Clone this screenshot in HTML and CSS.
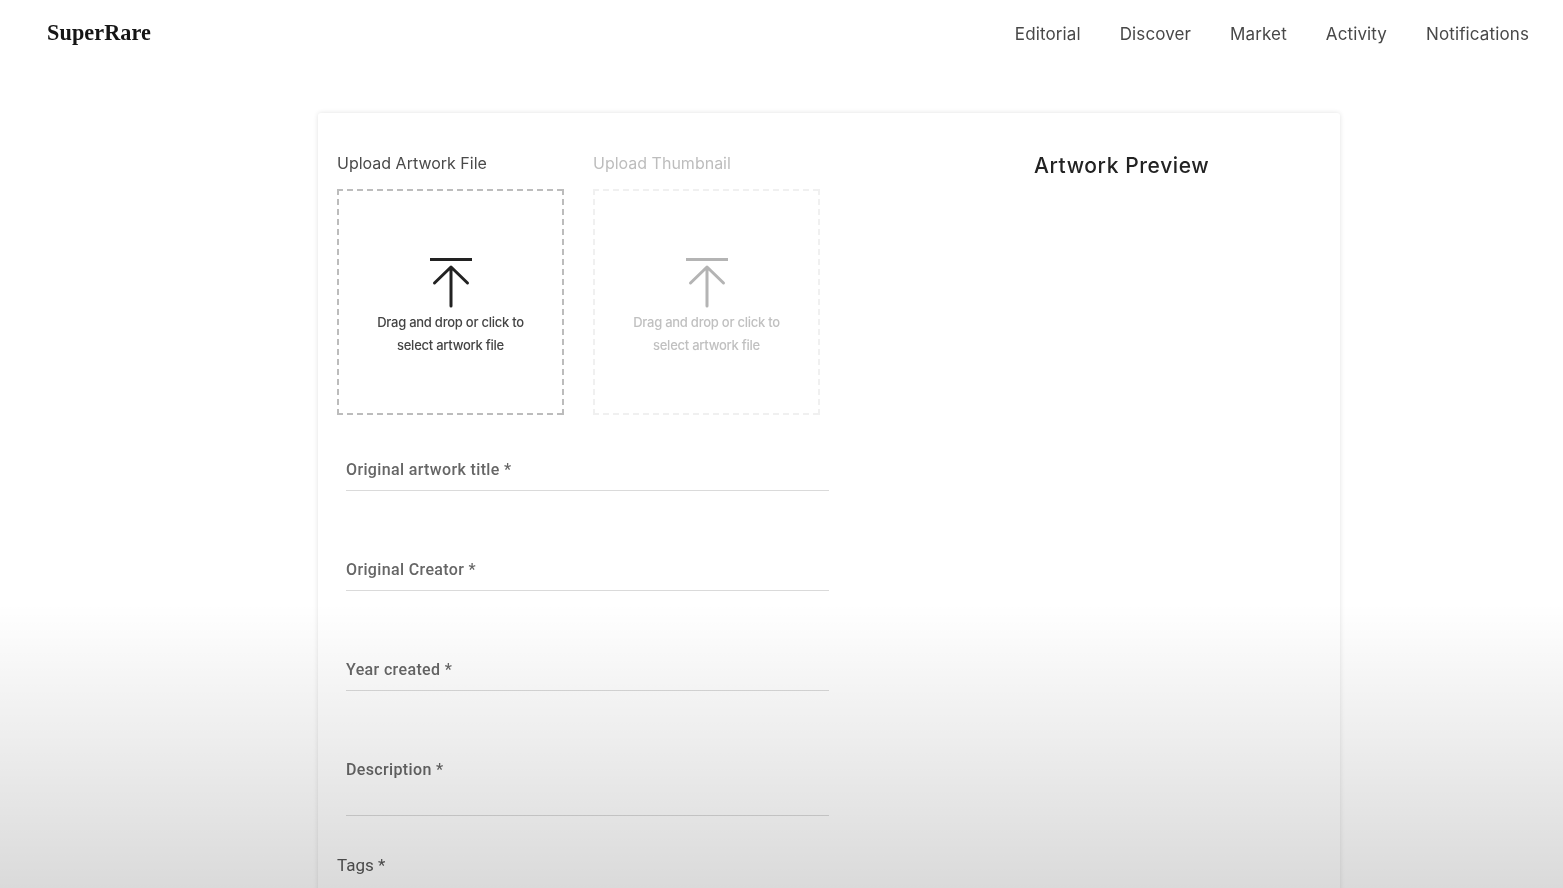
FILE: index.html
```html
<!DOCTYPE html>
<html lang="en">
<head>
<meta charset="utf-8">
<title>SuperRare</title>
<link rel="stylesheet" href="styles.css">
</head>
<body>
<header class="topbar">
  <a class="logo">SuperRare</a>
  <nav class="nav">
    <a class="nav-link">Editorial</a>
    <a class="nav-link">Discover</a>
    <a class="nav-link">Market</a>
    <a class="nav-link">Activity</a>
    <a class="nav-link">Notifications</a>
  </nav>
</header>
<main class="card">
  <section class="form-col">
    <div class="uploads">
      <div class="upload">
        <div class="upload-label">Upload Artwork File</div>
        <div class="dropzone">
          <svg class="upload-icon" width="44" height="50" viewBox="0 0 44 50" fill="none" stroke="currentColor" stroke-width="3" stroke-linecap="round" stroke-linejoin="round"><path d="M1 1.5H43" stroke-linecap="butt"/><path d="M22 48V9M5.5 25L22 9L38.5 25"/></svg>
          <p class="drop-text">Drag and drop or click to<br>select artwork file</p>
        </div>
      </div>
      <div class="upload upload-disabled">
        <div class="upload-label">Upload Thumbnail</div>
        <div class="dropzone">
          <svg class="upload-icon" width="44" height="50" viewBox="0 0 44 50" fill="none" stroke="currentColor" stroke-width="3" stroke-linecap="round" stroke-linejoin="round"><path d="M1 1.5H43" stroke-linecap="butt"/><path d="M22 48V9M5.5 25L22 9L38.5 25"/></svg>
          <p class="drop-text">Drag and drop or click to<br>select artwork file</p>
        </div>
      </div>
    </div>
    <div class="field"><label class="field-label">Original artwork title *</label></div>
    <div class="field"><label class="field-label">Original Creator *</label></div>
    <div class="field"><label class="field-label">Year created *</label></div>
    <div class="field field-tall"><label class="field-label">Description *</label></div>
    <div class="tags-label">Tags *</div>
  </section>
  <aside class="preview-col">
    <h2 class="preview-title">Artwork Preview</h2>
  </aside>
</main>
<div class="fade"></div>
</body>
</html>
```

FILE: styles.css
```css
* { box-sizing: border-box; }
html, body { margin: 0; height: 100%; }
body {
  position: relative;
  height: 888px;
  overflow: hidden;
  background: #fff;
  color: #333;
  font-family: "Inter", "Liberation Sans", sans-serif;
}
.topbar {
  display: flex;
  align-items: center;
  justify-content: space-between;
  height: 66px;
  padding: 1px 34px 0 47px;
  filter: blur(0.35px);
}
.logo {
  padding-bottom: 2px;
  font-family: "Liberation Serif", serif;
  font-size: 22.2px;
  font-weight: 700;
  letter-spacing: 0.1px;
  color: #151515;
}
.nav { display: flex; gap: 39px; }
.nav-link { font-size: 17px; letter-spacing: 0.12px; color: #484848; }
.card {
  display: flex;
  width: 1022px;
  height: 800px;
  margin: 47px 0 0 318px;
  padding: 40px 0 0 19px;
  border-radius: 3px;
  background: #fff;
  box-shadow: 0 0 5px rgba(0, 0, 0, 0.12);
  filter: blur(0.35px);
}
.form-col { width: 492px; }
.uploads { display: flex; gap: 29px; margin-bottom: 40px; }
.upload-label {
  height: 20px;
  margin-bottom: 16px;
  font-size: 16px;
  line-height: 20px;
  color: #4a4a4a;
}
.dropzone {
  display: flex;
  flex-direction: column;
  align-items: center;
  width: 227px;
  height: 226px;
  padding-top: 69px;
  color: #222;
  --dash: #bcbcbc;
  background:
    repeating-linear-gradient(to right, var(--dash) 0 6px, transparent 6px 10px) top left / 100% 2px no-repeat,
    repeating-linear-gradient(to right, var(--dash) 0 6px, transparent 6px 10px) bottom left / 100% 2px no-repeat,
    repeating-linear-gradient(to bottom, var(--dash) 0 6px, transparent 6px 10px) top left / 2px 100% no-repeat,
    repeating-linear-gradient(to bottom, var(--dash) 0 6px, transparent 6px 10px) top right / 2px 100% no-repeat;
}
.upload-icon { display: block; }
.drop-text {
  margin: 3px 0 0;
  font-size: 13px;
  font-weight: 500;
  line-height: 23px;
  letter-spacing: -0.25px;
  text-align: center;
  color: #444;
}
.upload-disabled .upload-label { color: #bdbdbd; }
.upload-disabled .dropzone { --dash: #f0f0f0; color: #b4b4b4; }
.upload-disabled .drop-text { color: #c0c0c0; }
.field {
  display: flex;
  align-items: flex-start;
  width: 483px;
  height: 36px;
  margin: 0 0 64px 9px;
  padding-top: 5px;
  border-bottom: 1px solid #dadada;
}
.field-tall { height: 61px; margin-bottom: 39px; }
.field-label {
  font-family: "Roboto", "Liberation Sans", sans-serif;
  font-size: 16px;
  font-weight: 500;
  line-height: 20px;
  letter-spacing: 0.36px;
  color: #666;
}
.tags-label {
  font-family: "Roboto", "Liberation Sans", sans-serif;
  font-size: 17px;
  line-height: 20px;
  color: #555;
}
.preview-col { padding: 0 0 0 205px; }
.preview-title {
  margin: 0;
  font-size: 21px;
  font-weight: 500;
  line-height: 26px;
  letter-spacing: 0.6px;
  color: #222;
}
.fade {
  position: absolute;
  left: 0;
  right: 0;
  bottom: 0;
  height: 285px;
  background: linear-gradient(to bottom, rgba(0,0,0,0), rgba(0,0,0,0.145));
  pointer-events: none;
}
```
